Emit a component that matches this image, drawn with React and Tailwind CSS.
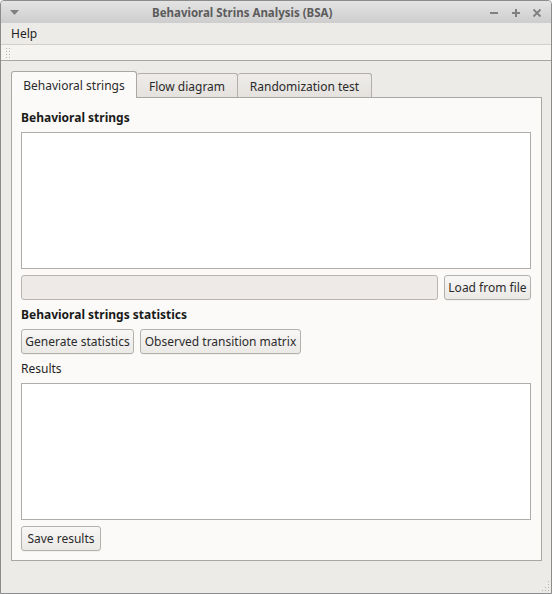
import React from "react";

const font = { fontFamily: '"Noto Sans", "Open Sans", sans-serif' };

function Btn({ children, w }) {
  return (
    <div
      className={`${w} h-[25px] shrink-0 whitespace-nowrap flex items-center justify-center rounded-[3px] border border-[#b4b0ac] bg-gradient-to-b from-[#f8f7f6] to-[#ebe9e6] text-[12px] text-[#2b2b2b] shadow-[0_1px_0_rgba(0,0,0,0.04)]`}
    >
      {children}
    </div>
  );
}

export default function App() {
  return (
    <div
      style={font}
      className="w-[552px] h-[594px] border border-[#8c8c8c] rounded-t-[4px] overflow-hidden flex flex-col bg-[#edebe7] relative"
    >
      {/* Title bar */}
      <div className="h-[22px] shrink-0 bg-gradient-to-b from-[#e4e4e4] to-[#cdcdcd] relative flex items-center">
        <svg className="absolute left-[9px] top-[9px]" width="9" height="5" viewBox="0 0 9 5">
          <path d="M0 0 L9 0 L4.5 5 Z" fill="#808080" />
        </svg>
        <div className="absolute left-[151px] top-0 h-[22px] leading-[23px] text-[11.5px] font-bold text-[#5c5c5c] whitespace-nowrap">
          Behavioral Strins Analysis (BSA)
        </div>
        <svg className="absolute left-[488px] top-[7px]" width="10" height="10" viewBox="0 0 10 10">
          <rect x="1" y="4" width="8" height="2" fill="#808080" />
        </svg>
        <svg className="absolute left-[510px] top-[7px]" width="10" height="10" viewBox="0 0 10 10">
          <rect x="1" y="4" width="8" height="2" fill="#808080" />
          <rect x="4" y="1" width="2" height="8" fill="#808080" />
        </svg>
        <svg className="absolute left-[531px] top-[7px]" width="10" height="10" viewBox="0 0 10 10">
          <path d="M1.5 1.5 L8.5 8.5 M8.5 1.5 L1.5 8.5" stroke="#808080" strokeWidth="1.8" />
        </svg>
      </div>

      {/* Menu bar */}
      <div className="h-[21px] shrink-0 flex items-center px-[10px] text-[12px] text-[#1f1f1f]">
        Help
      </div>

      {/* Toolbar */}
      <div className="h-[17px] shrink-0 border-t border-b border-t-[#d3d0cc] border-b-[#a8a6a3] bg-[#f6f4f1] flex items-center pl-[5px]">
        <div className="flex flex-col gap-[2px]">
          {[0, 1, 2, 3].map((i) => (
            <div key={i} className="flex gap-[2px]">
              <div className="w-[1px] h-[1px] bg-[#b8b5b1]" />
              <div className="w-[1px] h-[1px] bg-[#b8b5b1]" />
            </div>
          ))}
        </div>
      </div>

      {/* Main area */}
      <div className="flex-1 flex flex-col pl-[10px] pr-[9px] pt-[10px]">
        {/* Tab row */}
        <div className="h-[26px] flex items-end text-[12px] text-[#2a2a2a] whitespace-nowrap">
          <div className="relative z-10 w-[126px] h-[27px] -mb-px border border-b-0 border-[#aaa7a4] rounded-t-[3px] bg-[#fcfaf8] flex items-center justify-center pt-[1px]">
            Behavioral strings
          </div>
          <div className="w-[101px] h-[24px] border border-b-0 border-l-0 border-[#b1aeab] rounded-t-[3px] bg-gradient-to-b from-[#eeece9] to-[#e5e2de] flex items-center justify-center pt-[2px]">
            Flow diagram
          </div>
          <div className="w-[134px] h-[24px] border border-b-0 border-l-0 border-[#b1aeab] rounded-t-[3px] bg-gradient-to-b from-[#eeece9] to-[#e5e2de] flex items-center justify-center pt-[2px]">
            Randomization test
          </div>
        </div>

        {/* Pane */}
        <div className="w-[531px] h-[464px] border border-[#a9a6a3] bg-[#fcfaf8] flex flex-col pl-[9px] pr-[10px] text-[12px] text-[#1f1f1f]">
          <div className="mt-[11px] h-[18px] leading-[18px] font-bold text-[#1a1a1a]">
            Behavioral strings
          </div>
          <div className="mt-[5px] h-[137px] shrink-0 border border-[#b0aca8] bg-white" />
          <div className="mt-[6px] h-[25px] flex gap-[6px]">
            <div className="flex-1 h-[25px] rounded-[3px] border border-[#b9b5b1] bg-[#edeae7]" />
            <Btn w="w-[87px]">Load from file</Btn>
          </div>
          <div className="mt-[6px] h-[18px] leading-[18px] font-bold text-[#1a1a1a]">
            Behavioral strings statistics
          </div>
          <div className="mt-[5px] flex gap-[6px]">
            <Btn w="w-[113px]">Generate statistics</Btn>
            <Btn w="w-[161px]">Observed transition matrix</Btn>
          </div>
          <div className="mt-[6px] h-[18px] leading-[18px]">Results</div>
          <div className="mt-[5px] h-[137px] shrink-0 border border-[#b0aca8] bg-white" />
          <div className="mt-[6px] flex">
            <Btn w="w-[80px]">Save results</Btn>
          </div>
        </div>
      </div>

      {/* Resize grip */}
      <div className="absolute right-[2px] bottom-[2px] flex flex-col items-end gap-[2px]">
        <div className="flex gap-[2px]">
          <div className="w-[1px] h-[1px] bg-[#b5b2ae]" />
        </div>
        <div className="flex gap-[2px]">
          <div className="w-[1px] h-[1px] bg-[#b5b2ae]" />
        </div>
        <div className="flex gap-[2px]">
          <div className="w-[1px] h-[1px] bg-[#b5b2ae]" />
          <div className="w-[1px] h-[1px] bg-[#b5b2ae]" />
        </div>
        <div className="flex gap-[2px]">
          <div className="w-[1px] h-[1px] bg-[#b5b2ae]" />
          <div className="w-[1px] h-[1px] bg-[#b5b2ae]" />
          <div className="w-[1px] h-[1px] bg-[#b5b2ae]" />
        </div>
      </div>
    </div>
  );
}
